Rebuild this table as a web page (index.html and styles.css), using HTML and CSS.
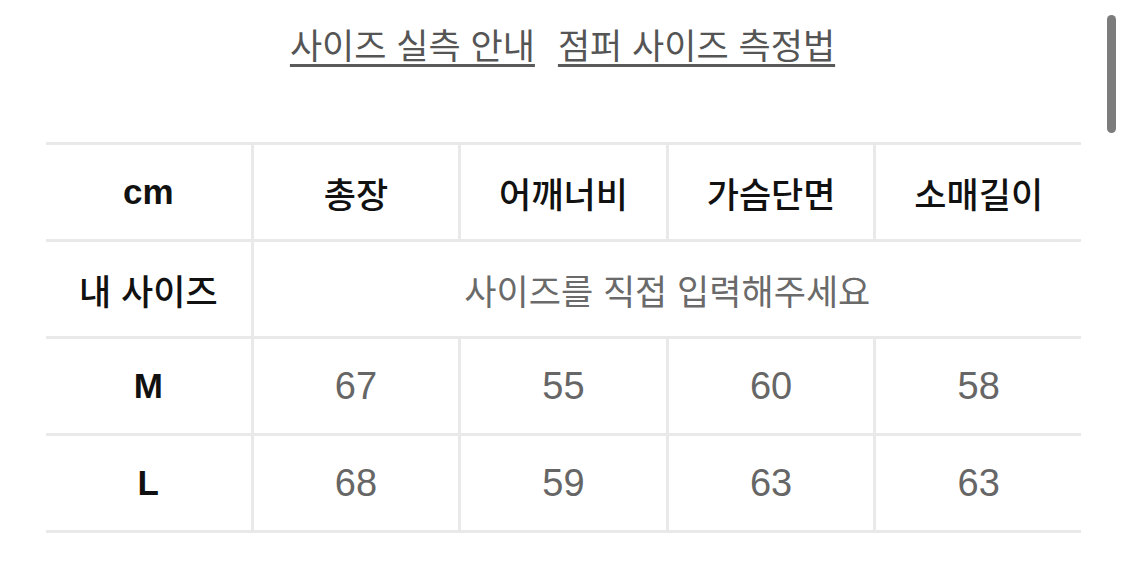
FILE: index.html
```html
<!DOCTYPE html>
<html lang="ko">
<head>
<meta charset="utf-8">
<title>사이즈 실측 안내</title>
<link rel="stylesheet" href="styles.css">
</head>
<body>
<div class="page">
  <nav class="links">
    <a class="link" href="#">사이즈 실측 안내</a>
    <a class="link" href="#">점퍼 사이즈 측정법</a>
  </nav>
  <div class="size-grid">
    <div class="cell head latin">cm</div>
    <div class="cell head">총장</div>
    <div class="cell head">어깨너비</div>
    <div class="cell head">가슴단면</div>
    <div class="cell head">소매길이</div>

    <div class="cell head">내 사이즈</div>
    <div class="cell hint span4">사이즈를 직접 입력해주세요</div>

    <div class="cell head latin">M</div>
    <div class="cell num">67</div>
    <div class="cell num">55</div>
    <div class="cell num">60</div>
    <div class="cell num">58</div>

    <div class="cell head latin">L</div>
    <div class="cell num">68</div>
    <div class="cell num">59</div>
    <div class="cell num">63</div>
    <div class="cell num">63</div>
  </div>
  <div class="scroll-indicator"></div>
</div>
</body>
</html>
```

FILE: styles.css
```css
html, body {
  margin: 0;
  padding: 0;
  background: #ffffff;
}

.page {
  position: relative;
  width: 1125px;
  height: 573px;
  overflow: hidden;
  font-family: "Noto Sans CJK KR", "Noto Sans", sans-serif;
}

.links {
  display: flex;
  justify-content: center;
  gap: 23px;
  padding-top: 21px;
  height: 142px;
  box-sizing: border-box;
}

.link {
  font-size: 35px;
  line-height: 46px;
  color: #555555;
  text-decoration: underline;
  text-decoration-thickness: 3px;
  text-underline-offset: 5px;
  text-decoration-color: #5a5a5a;
}

.size-grid {
  margin-left: 46px;
  width: 1035px;
  display: grid;
  grid-template-columns: repeat(5, 1fr);
  grid-auto-rows: 94px;
  gap: 3px;
  padding: 3px 0;
  background: #e9e9e9;
}

.cell {
  background: #ffffff;
  display: flex;
  align-items: center;
  justify-content: center;
}

.head {
  font-size: 35px;
  font-weight: 500;
  color: #111111;
}

.latin {
  font-family: "Liberation Sans", Arial, sans-serif;
  font-weight: 700;
  font-size: 35px;
}

.hint {
  font-size: 35px;
  color: #6a6a6a;
}

.span4 {
  grid-column: span 4;
}

.num {
  font-family: "Liberation Sans", Arial, sans-serif;
  font-size: 38px;
  color: #666666;
}

.scroll-indicator {
  position: absolute;
  left: 1107px;
  top: 15px;
  width: 9px;
  height: 118px;
  border-radius: 5px;
  background: #7c7c7c;
}
```
